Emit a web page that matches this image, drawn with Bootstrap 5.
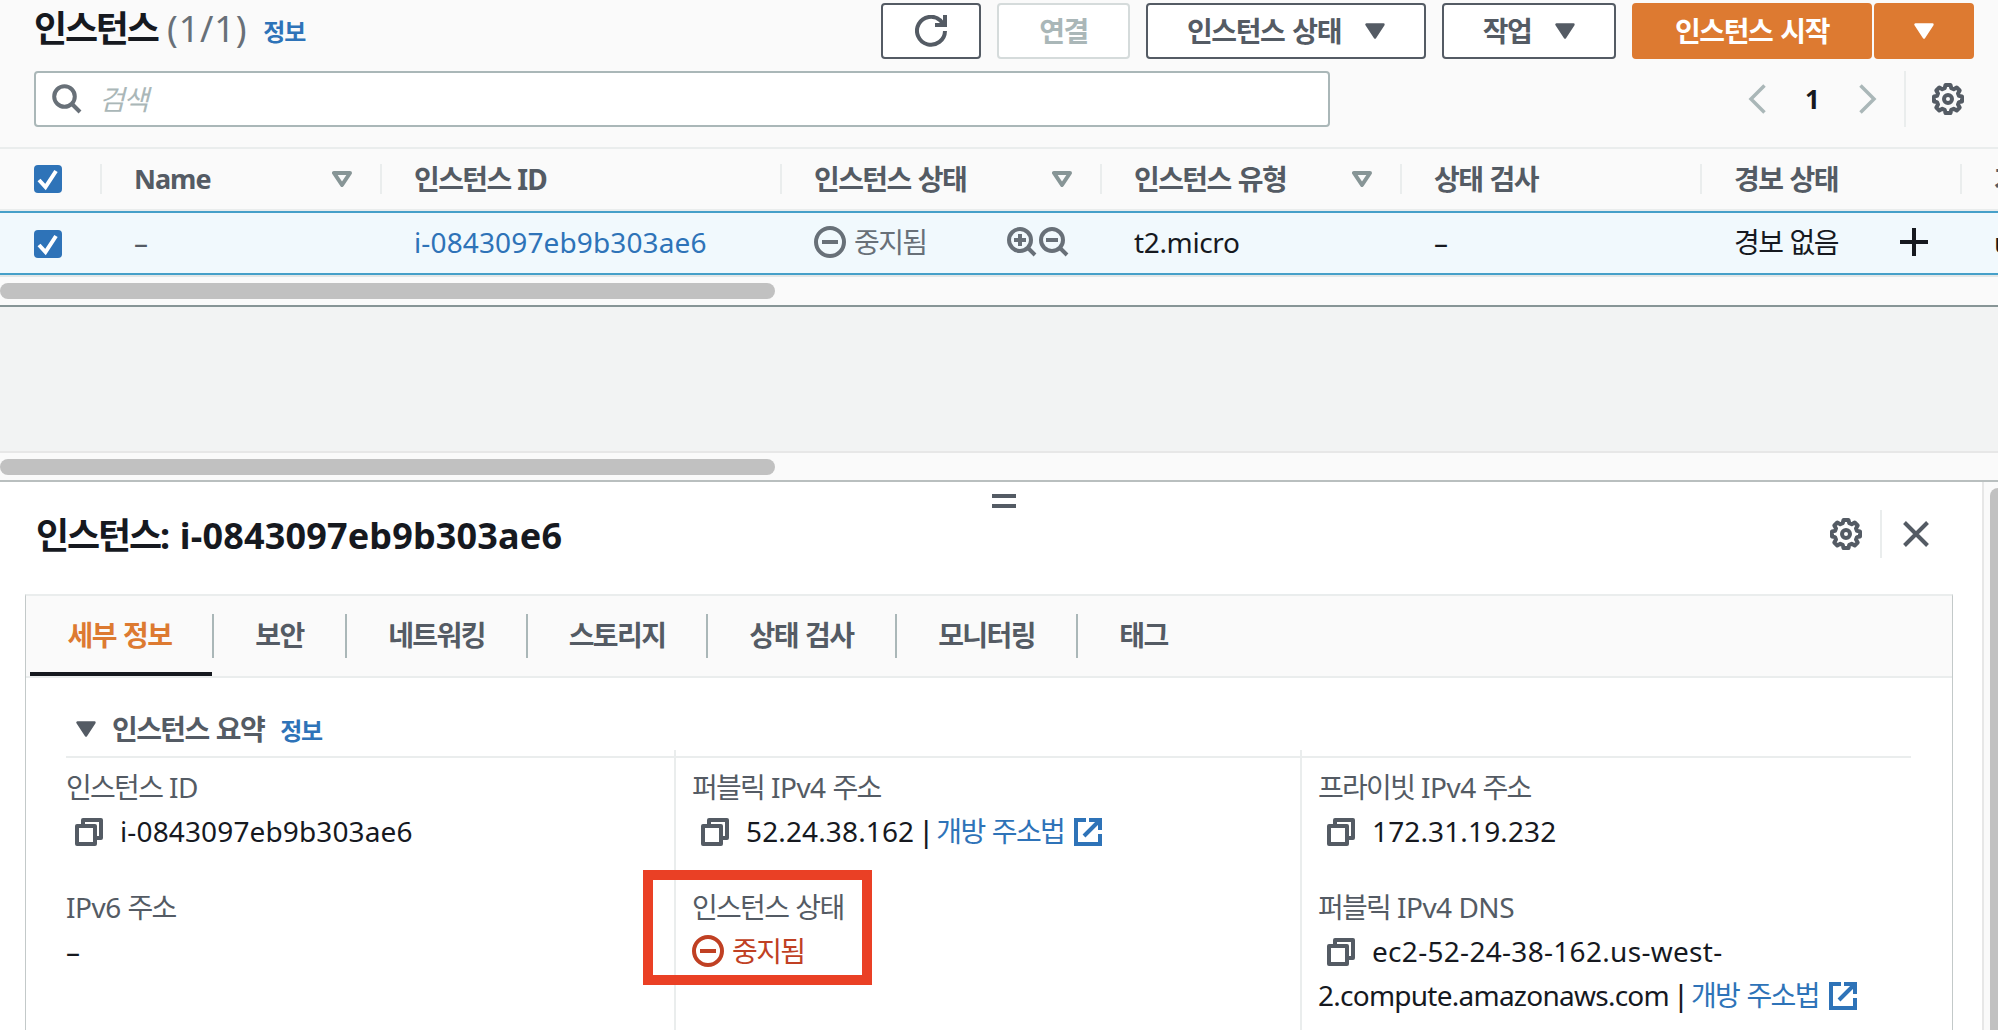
<!DOCTYPE html>
<html lang="ko">

<head>
   <meta charset="UTF-8">
   <title>인스턴스 | EC2</title>
   <link href="https://cdn.jsdelivr.net/npm/bootstrap@5.3.0/dist/css/bootstrap.min.css" rel="stylesheet">
   <style>
      body {
         font-family: "Noto Sans", "Noto Sans CJK KR", sans-serif;
         font-size: 28px;
         line-height: 44px;
         color: #16191f;
         background: #f2f3f3;
         height: 1030px;
         overflow: hidden;
      }

      a {
         color: #2e73b8;
         text-decoration: none;
      }

      svg {
         display: block;
         flex: none;
         fill: none;
         stroke: currentColor;
      }

      .ko {
         letter-spacing: -1.6px;
         word-spacing: 1.5px;
      }

      .slate {
         color: #545b64;
      }

      .num {
         letter-spacing: .13px;
      }

      .info-link {
         font-size: 24px;
         font-weight: 700;
         letter-spacing: -1.2px;
      }

      /* instance list */
      .list-pane {
         height: 307px;
         background: #fafafa;
         border-bottom: 2px solid #879596;
      }

      .toolbar {
         height: 59px;
         padding: 3px 24px 0 34px;
      }

      .page-title {
         font-size: 36px;
         line-height: 52px;
      }

      .page-title .ko {
         letter-spacing: -2.2px;
      }

      .page-title .count {
         color: #687078;
         letter-spacing: .8px;
      }

      .toolbar .info-link {
         padding-top: 7px;
      }

      .btn-aws {
         height: 56px;
         padding: 0;
         border: 2px solid #545b64;
         border-radius: 4px;
         background: #fff;
         color: #545b64;
         font-size: 28px;
         font-weight: 700;
         line-height: 44px;
         letter-spacing: -1.4px;
         word-spacing: 2px;
      }

      .btn-aws:disabled {
         border-color: #d5dbdb;
         background: #fff;
         color: #aab7b8;
         opacity: 1;
      }

      .btn-launch {
         border-color: #dd7a31;
         background: #dd7a31;
         color: #fff;
      }

      .w-refresh { width: 100px; }
      .w-connect { width: 133px; }
      .w-state { width: 280px; }
      .w-action { width: 174px; }
      .w-launch { width: 240px; }

      .filter-bar {
         height: 88px;
         padding: 12px 34px 20px 34px;
      }

      .search-box {
         width: 1296px;
         border: 2px solid #aab7b8;
         border-radius: 4px;
         background: #fff;
         padding-left: 16px;
         color: #687078;
      }

      .search-box .hint {
         color: #aab7b8;
         font-style: italic;
         margin-left: 17px;
      }

      .pager {
         color: #aab7b8;
      }

      .pager b {
         color: #16191f;
         font-size: 26px;
         width: 93px;
         text-align: center;
      }

      .pager-line {
         width: 2px;
         height: 56px;
         background: #eaeded;
         margin: 0 26px 0 27px;
      }

      .instances {
         table-layout: fixed;
         width: 2262px;
         border-collapse: separate;
         border-spacing: 0;
         border-top: 2px solid #eaeded;
         border-bottom: 2px solid #e3e7e7;
      }

      .instances th {
         height: 62px;
         padding: 0;
         border-bottom: 2px solid #eaeded;
         color: #545b64;
      }

      .instances th>div {
         height: 30px;
         border-right: 2px solid #eaeded;
         padding: 0 28px 0 32px;
         white-space: nowrap;
      }

      .instances td {
         height: 64px;
         padding: 0 0 2px 32px;
         background: #f1f9fd;
         border-top: 2px solid #46a0c9;
         border-bottom: 2px solid #46a0c9;
      }

      .instances th:first-child>div,
      .instances td:first-child {
         padding-left: 34px;
      }

      .instances .name-label {
         font-size: 27px;
         letter-spacing: -1px;
      }

      .check {
         width: 28px;
         height: 28px;
         border-radius: 4px;
         background: #2e73b8;
         color: #fff;
      }

      .thumb {
         width: 775px;
         height: 16px;
         border-radius: 8px;
         background: #c1c1c1;
      }

      .spacer-pane {
         height: 144px;
      }

      .scroll-strip {
         height: 31px;
         padding-top: 6px;
         background: #fafafa;
         border-top: 2px solid #e7e7e7;
         border-bottom: 2px solid #b9bfbf;
      }

      /* details split panel */
      .detail-pane {
         position: relative;
         height: 548px;
         background: #fff;
      }

      .detail-body {
         width: 1982px;
         padding: 12px 29px 0 25px;
      }

      .grip {
         width: 24px;
         height: 14px;
         border: solid #545b64;
         border-width: 4px 0;
         margin-left: 967px;
      }

      .detail-head {
         height: 48px;
         margin-top: 2px;
         padding: 0 24px 0 11px;
      }

      .detail-head h2 {
         font-size: 36px;
         font-weight: 700;
         line-height: 52px;
         margin: 3px 0 0;
         letter-spacing: .15px;
      }

      .detail-head .ko {
         letter-spacing: -2.1px;
      }

      .head-line {
         width: 2px;
         height: 48px;
         background: #eaeded;
         margin: 0 21px 0 18px;
      }

      .detail-card {
         height: 460px;
         margin-top: 36px;
         border: 1px solid #c3c9c9;
         border-top: 2px solid #eaeded;
         border-bottom: 0;
      }

      .tab-strip {
         height: 82px;
         padding-left: 4px;
         background: #fafafa;
         border-bottom: 2px solid #eaeded;
      }

      .tab-strip .tab {
         height: 80px;
         padding: 18px 0;
         font-weight: 700;
         color: #545b64;
      }

      .tab-strip .tab span {
         display: block;
         border-left: 2px solid #aab7b8;
         text-align: center;
         line-height: 42px;
         height: 44px;
      }

      .tab-strip .tab.on {
         color: #dd7a31;
         box-shadow: 0 -4px 0 #16191f inset;
         padding-right: 3px;
      }

      .tab-strip .tab.on span {
         border: 0;
      }

      .summary {
         padding: 29px 41px 0 40px;
      }

      .summary-head {
         height: 51px;
         padding: 0 0 6px 10px;
         border-bottom: 2px solid #eaeded;
      }

      .fields {
         display: grid;
         grid-template-columns: 608px 626px 1fr;
         height: 290px;
         margin-top: -8px;
      }

      .fields>div {
         padding-top: 15px;
      }

      .fields>div+div {
         border-left: 2px solid #eaeded;
         padding-left: 16px;
      }

      .field {
         height: 120px;
      }

      .field .slate {
         letter-spacing: -.5px;
      }

      .field .slate .ko,
      .field .slate.ko {
         letter-spacing: -1.7px;
      }

      .value svg {
         display: inline-block;
         vertical-align: -4px;
      }

      .value .copy {
         margin: 0 17px 0 9px;
         color: #545b64;
      }

      .value .open-icon {
         margin-left: 10px;
      }

      .value .pipe {
         margin: 0 1px 0 0;
         letter-spacing: -3px;
         font-weight: 500;
      }

      .tight {
         letter-spacing: -.75px;
      }

      .stopped {
         color: #c04023;
      }

      /* marker over the state field */
      .marker {
         position: absolute;
         left: 643px;
         top: 388px;
         width: 229px;
         height: 115px;
         border: 10px solid #ea4025;
      }

      .side-scroll {
         width: 16px;
         height: 548px;
         padding: 6px 0 0 6px;
         background: #fafafa;
         border-left: 2px solid #e7e7e7;
         overflow: hidden;
      }

      .side-scroll div {
         width: 16px;
         height: 600px;
         border-radius: 8px;
         background: #c1c1c1;
      }
   </style>
</head>

<body>

   <!-- shared icons -->
   <svg class="d-none">
      <symbol id="caret" viewBox="0 0 20 16">
         <path d="M1.5 1.5h17L10 14.5z" fill="currentColor" stroke-width="2.4" stroke-linejoin="round" />
      </symbol>
      <symbol id="sort" viewBox="0 0 20 16">
         <path d="M2 2h16l-8 12z" stroke-width="4" stroke-linejoin="round" />
      </symbol>
      <symbol id="tick" viewBox="0 0 28 28">
         <path d="M5 15l6.500 7L22 6" stroke-width="4" />
      </symbol>
      <symbol id="gear" viewBox="0 0 32 32">
         <path d="M13.500 2h5l.8 3.200 2.400 1 3-1.700 3 3-1.700 3 1 2.400 3 .6v5l-3 .6-1 2.400 1.700 3-3 3-3-1.700-2.400 1-.8 3.200h-5l-.8-3.200-2.400-1-3 1.700-3-3 1.700-3-1-2.400-3-.6v-5l3-.6 1-2.400-1.700-3 3-3 3 1.700 2.400-1z" stroke-width="4" stroke-linejoin="round" />
         <circle cx="16" cy="16" r="4" stroke-width="4" />
      </symbol>
      <symbol id="minus-circle" viewBox="0 0 32 32">
         <circle cx="16" cy="16" r="14" stroke-width="4" />
         <path d="M8 16h16" stroke-width="4" />
      </symbol>
      <symbol id="copy" viewBox="0 0 28 28">
         <path d="M8 7V2h18v18h-5M2 8h18v18H2z" stroke-width="4" stroke-linejoin="round" />
      </symbol>
      <symbol id="external" viewBox="0 0 28 28">
         <path d="M12 2H2v24h24V16M15 2h11v10M26 2L10 18" stroke-width="4" />
      </symbol>
   </svg>

   <section class="list-pane overflow-hidden">
      <div class="toolbar d-flex justify-content-between">
         <div class="d-flex">
            <div class="page-title"><b class="ko">인스턴스</b> <span class="count">(1/1)</span></div>
            <a href="#" class="info-link ms-3">정보</a>
         </div>
         <div class="d-flex gap-3">
            <button class="btn btn-aws w-refresh d-flex align-items-center justify-content-center">
               <svg width="32" height="32" viewBox="0 0 32 32" stroke-width="4">
                  <path d="M30 16A14 14 0 1 1 25.500 5.500l3 4M30 0v10H20" />
               </svg>
            </button>
            <button class="btn btn-aws w-connect" disabled>연결</button>
            <button class="btn btn-aws w-state d-flex align-items-center justify-content-center">인스턴스 상태
               <svg class="ms-4" width="20" height="16"><use href="#caret" /></svg>
            </button>
            <button class="btn btn-aws w-action d-flex align-items-center justify-content-center">작업
               <svg class="ms-4" width="20" height="16"><use href="#caret" /></svg>
            </button>
            <div class="d-flex" style="gap: 2px">
               <button class="btn btn-aws btn-launch w-launch">인스턴스 시작</button>
               <button class="btn btn-aws btn-launch w-refresh d-flex align-items-center justify-content-center">
                  <svg width="20" height="16"><use href="#caret" /></svg>
               </button>
            </div>
         </div>
      </div>

      <div class="filter-bar d-flex justify-content-between">
         <div class="search-box d-flex align-items-center">
            <svg width="30" height="30" viewBox="0 0 30 30" stroke-width="4">
               <circle cx="12.500" cy="12.500" r="10.300" />
               <path d="M19.500 19.500l8.500 8.500" />
            </svg>
            <span class="hint ko">검색</span>
         </div>
         <div class="pager d-flex align-items-center">
            <svg width="18" height="30" viewBox="0 0 18 30" stroke-width="3.500"><path d="M16.500 1.500L3 15l13.500 13.500" /></svg>
            <b>1</b>
            <svg width="18" height="30" viewBox="0 0 18 30" stroke-width="3.500"><path d="M1.500 1.500L15 15 1.500 28.500" /></svg>
            <div class="pager-line"></div>
            <svg class="slate" width="32" height="32"><use href="#gear" /></svg>
         </div>
      </div>

      <table class="instances">
         <colgroup>
            <col style="width: 102px">
            <col style="width: 280px">
            <col style="width: 400px">
            <col style="width: 320px">
            <col style="width: 300px">
            <col style="width: 300px">
            <col style="width: 260px">
            <col style="width: 300px">
         </colgroup>
         <thead>
            <tr>
               <th><div class="d-flex align-items-center"><span class="check"><svg width="28" height="28"><use href="#tick" /></svg></span></div></th>
               <th><div class="d-flex align-items-center justify-content-between"><span class="name-label">Name</span><svg width="20" height="16" color="#879596"><use href="#sort" /></svg></div></th>
               <th><div class="d-flex align-items-center"><span class="tight"><span class="ko">인스턴스</span> ID</span></div></th>
               <th><div class="d-flex align-items-center justify-content-between"><span class="ko">인스턴스 상태</span><svg width="20" height="16" color="#879596"><use href="#sort" /></svg></div></th>
               <th><div class="d-flex align-items-center justify-content-between"><span class="ko">인스턴스 유형</span><svg width="20" height="16" color="#879596"><use href="#sort" /></svg></div></th>
               <th><div class="d-flex align-items-center"><span class="ko">상태 검사</span></div></th>
               <th><div class="d-flex align-items-center"><span class="ko">경보 상태</span></div></th>
               <th><div class="d-flex align-items-center"><span class="ko">가용 영역</span></div></th>
            </tr>
         </thead>
         <tbody>
            <tr>
               <td><div class="check mt-1"><svg width="28" height="28"><use href="#tick" /></svg></div></td>
               <td class="slate">–</td>
               <td><a href="#" class="num">i-0843097eb9b303ae6</a></td>
               <td>
                  <div class="d-flex align-items-center" style="color: #687078">
                     <svg width="32" height="32"><use href="#minus-circle" /></svg>
                     <span class="ko ms-2">중지됨</span>
                     <div class="d-flex ms-auto" style="gap: 2px; margin-right: 33px">
                        <svg width="30" height="30" viewBox="0 0 30 30" stroke-width="4"><circle cx="13" cy="13" r="11" /><path d="M7 13h12M13 7v12M20.500 20.500l7.500 7.500" /></svg>
                        <svg width="30" height="30" viewBox="0 0 30 30" stroke-width="4"><circle cx="13" cy="13" r="11" /><path d="M7 13h12M20.500 20.500l7.500 7.500" /></svg>
                     </div>
                  </div>
               </td>
               <td style="letter-spacing: -.35px">t2.micro</td>
               <td>–</td>
               <td>
                  <div class="d-flex align-items-center justify-content-between">
                     <span class="ko">경보 없음</span>
                     <svg width="28" height="28" viewBox="0 0 28 28" stroke-width="4" style="margin-right: 34px"><path d="M0 14h28M14 0v28" /></svg>
                  </div>
               </td>
               <td>us-west-2a</td>
            </tr>
         </tbody>
      </table>
      <div class="thumb" style="margin-top: 6px"></div>
   </section>

   <div class="spacer-pane"></div>
   <div class="scroll-strip">
      <div class="thumb"></div>
   </div>

   <section class="detail-pane d-flex">
      <div class="detail-body">
         <div class="grip"></div>
         <div class="detail-head d-flex align-items-center justify-content-between">
            <h2><span class="ko">인스턴스</span>: i-0843097eb9b303ae6</h2>
            <div class="d-flex align-items-center slate">
               <svg width="32" height="32"><use href="#gear" /></svg>
               <div class="head-line"></div>
               <svg width="26" height="26" viewBox="0 0 26 26" stroke-width="4"><path d="M1.500 1.500l23 23M24.500 1.500l-23 23" /></svg>
            </div>
         </div>

         <div class="detail-card">
            <div class="tab-strip d-flex ko">
               <div class="tab on" style="width: 182px"><span>세부 정보</span></div>
               <div class="tab" style="width: 133px"><span>보안</span></div>
               <div class="tab" style="width: 181px"><span>네트워킹</span></div>
               <div class="tab" style="width: 180px"><span>스토리지</span></div>
               <div class="tab" style="width: 189px"><span>상태 검사</span></div>
               <div class="tab" style="width: 181px"><span>모니터링</span></div>
               <div class="tab" style="width: 133px"><span>태그</span></div>
            </div>

            <div class="summary">
               <div class="summary-head d-flex align-items-center">
                  <svg class="slate" width="20" height="16"><use href="#caret" /></svg>
                  <b class="ko slate ms-3">인스턴스 요약</b>
                  <a href="#" class="info-link ms-3 pt-1">정보</a>
               </div>
               <div class="fields">
                  <div>
                     <div class="field">
                        <div class="slate"><span class="ko">인스턴스</span> ID</div>
                        <div class="value num"><svg class="copy" width="28" height="28"><use href="#copy" /></svg>i-0843097eb9b303ae6</div>
                     </div>
                     <div class="field">
                        <div class="slate">IPv6 <span class="ko">주소</span></div>
                        <div class="value">–</div>
                     </div>
                  </div>
                  <div>
                     <div class="field">
                        <div class="slate"><span class="ko">퍼블릭</span> IPv4 <span class="ko">주소</span></div>
                        <div class="value num"><svg class="copy" width="28" height="28"><use href="#copy" /></svg>52.24.38.162<span class="pipe"> | </span><a href="#"><span class="ko">개방 주소법</span><svg class="open-icon" width="28" height="28"><use href="#external" /></svg></a></div>
                     </div>
                     <div class="field">
                        <div class="slate ko">인스턴스 상태</div>
                        <div class="value stopped ko d-flex align-items-center"><svg width="32" height="32"><use href="#minus-circle" /></svg><span class="ms-2">중지됨</span></div>
                     </div>
                  </div>
                  <div>
                     <div class="field">
                        <div class="slate"><span class="ko">프라이빗</span> IPv4 <span class="ko">주소</span></div>
                        <div class="value num"><svg class="copy" width="28" height="28"><use href="#copy" /></svg>172.31.19.232</div>
                     </div>
                     <div class="field">
                        <div class="slate"><span class="ko">퍼블릭</span> IPv4 DNS</div>
                        <div class="value"><svg class="copy" width="28" height="28"><use href="#copy" /></svg><span style="letter-spacing: .3px">ec2-52-24-38-162.us-west-</span><br><span class="tight">2.compute.amazonaws.com</span><span class="pipe"> | </span><a href="#"><span class="ko">개방 주소법</span><svg class="open-icon" width="28" height="28"><use href="#external" /></svg></a></div>
                     </div>
                  </div>
               </div>
            </div>
         </div>
      </div>
      <div class="side-scroll"><div></div></div>
      <div class="marker"></div>
   </section>

   <script src="https://cdn.jsdelivr.net/npm/bootstrap@5.3.0/dist/js/bootstrap.bundle.min.js"></script>
</body>

</html>
